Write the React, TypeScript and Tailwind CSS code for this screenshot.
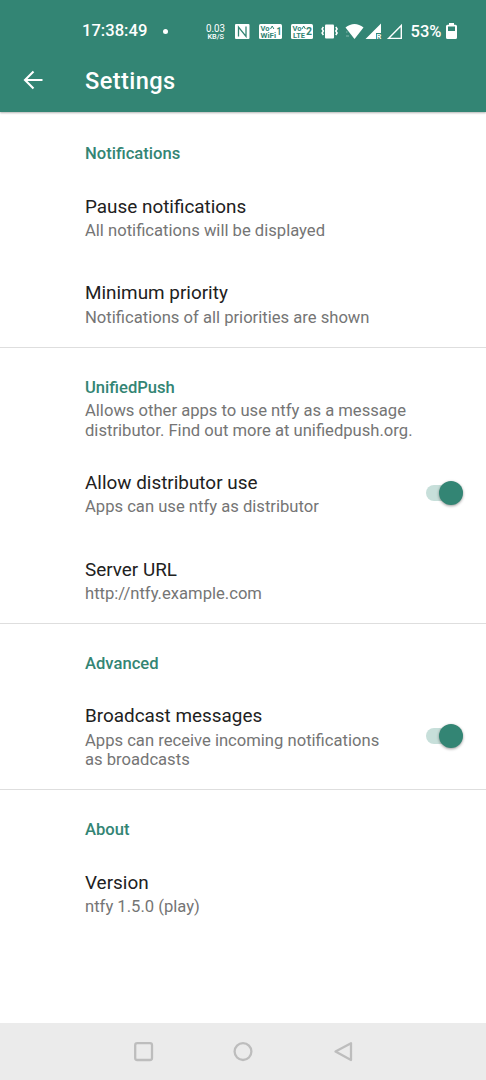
import type { ReactNode } from "react";

function Heading({ title, children }: { title: string; children?: ReactNode }) {
  return (
    <div className="pt-[30px] pb-[9.3px] pl-[85px]">
      <h2 className="text-[16.6px] leading-5 font-medium text-[#338574]">{title}</h2>
      {children && (
        <p className="mt-[3px] text-[16.63px] leading-[19.5px] text-[#757575]">
          {children}
        </p>
      )}
    </div>
  );
}

function Toggle() {
  return (
    <div className="mb-[3.5px] flex h-[16px] w-[37px] items-center justify-end rounded-full bg-[#c7dfda]">
      <div className="size-6 shrink-0 rounded-full bg-[#338574] shadow-[0_1px_3px_rgba(0,0,0,0.4)]" />
    </div>
  );
}

function Item({ title, children, toggle }: { title: string; children: ReactNode; toggle?: boolean }) {
  return (
    <div className="flex items-center justify-between pt-[22.6px] pb-[19px] pr-[23px] pl-[85px]">
      <div>
        <h3 className="text-[18.9px] leading-[22px] text-[#212121]">{title}</h3>
        <p className="mt-[3.5px] text-[16.63px] leading-[19.5px] text-[#757575]">
          {children}
        </p>
      </div>
      {toggle && <Toggle />}
    </div>
  );
}

function StatusIcons() {
  return (
    <svg width="266" height="24" viewBox="200 19 266 24" fill="#fff" fontFamily="Roboto, sans-serif">
      <text x="206" y="31.500" fontSize="10.500" textLength="19" lengthAdjust="spacingAndGlyphs">0.03</text>
      <text x="207.500" y="39" fontSize="6.600" fontWeight="500" textLength="16.500" lengthAdjust="spacingAndGlyphs">KB/S</text>
      <rect x="235" y="24" width="14.500" height="15" rx="1" />
      <path d="M238.500 36.500V27l7.500 9.500V26.500" fill="none" stroke="#338574" strokeWidth="1.300" />
      <rect x="259" y="24" width="23" height="15" rx="1.500" />
      <rect x="291" y="24" width="22" height="15" rx="1.500" />
      <g fill="#338574" fontWeight="700">
        <text x="260.500" y="31" fontSize="8" textLength="9" lengthAdjust="spacingAndGlyphs">Vo</text>
        <text x="260.500" y="38.300" fontSize="8" textLength="15.500" lengthAdjust="spacingAndGlyphs">WiFi</text>
        <text x="276.500" y="35" fontSize="10.500" textLength="5" lengthAdjust="spacingAndGlyphs">1</text>
        <text x="292.500" y="31" fontSize="8" textLength="9" lengthAdjust="spacingAndGlyphs">Vo</text>
        <text x="293" y="38.300" fontSize="8" textLength="12" lengthAdjust="spacingAndGlyphs">LTE</text>
        <text x="306" y="35" fontSize="10.500" textLength="6" lengthAdjust="spacingAndGlyphs">2</text>
      </g>
      <path d="m270.500 29 1.700-3 1.700 3M302 29l1.700-3 1.700 3" fill="none" stroke="#338574" />
      <rect x="325" y="24.500" width="9" height="14" rx="1" />
      <path d="m323.400 27-1.300 2 1.300 2-1.300 2 1.300 2M335.800 27l1.300 2-1.300 2 1.300 2-1.300 2" fill="none" stroke="#fff" strokeWidth="1.500" />
      <path d="M345.500 27.500c5.500-4.700 12.500-4.700 18 0L354.500 39Z" />
      <path d="M346 36h3M346 32h1.500" stroke="#fff" opacity=".4" />
      <path d="M365.500 39 381 23.500v9.500h-5V39Z" />
      <text x="376.500" y="39.300" fontSize="7.500" fontWeight="700">R</text>
      <path d="M388.500 38.400 401.300 25.500v12.900Z" fill="none" stroke="#fff" strokeWidth="1.400" />
      <text x="410.500" y="36.500" fontSize="16.500" fontWeight="500" textLength="31">53%</text>
      <path fillRule="evenodd" d="M449 23h5v1.700h1.500q1.500 0 1.500 1.500v11.300q0 1.500-1.500 1.500h-8q-1.500 0-1.500-1.500V26.200q0-1.500 1.500-1.500H449ZM448 26.500V31h7V26.500Z" />
    </svg>
  );
}

export default function App() {
  return (
    <div className="flex h-[1080px] w-[486px] flex-col overflow-hidden bg-white font-['Roboto',sans-serif]">
      <header className="h-[112px] shrink-0 bg-[#338574] text-white shadow-[0_1px_2px_rgba(0,0,0,0.3)]">
        <div className="flex h-[50px] items-center pt-3 pl-[82px]">
          <time className="w-[81px] text-[16.6px] leading-5 font-medium">17:38:49</time>
          <span className="mr-[32px] size-[5px] rounded-full bg-white" />
          <StatusIcons />
        </div>
        <div className="flex h-[62px] items-center">
          <svg className="mb-[2px] ml-[23px]" width="20" height="20" viewBox="0 0 20 20" fill="none" stroke="#fff" strokeWidth="2.100">
            <path d="M19.500 10H2.300M10.500 1.500 2 10l8.500 8.500" />
          </svg>
          <h1 className="ml-[42px] text-[23.6px] leading-7 font-medium tracking-[0.4px]">Settings</h1>
        </div>
      </header>
      <main className="flex-1 pt-[2px]">
        <section className="border-b border-[#dedede] pb-[0.6px]">
          <Heading title="Notifications" />
          <Item title="Pause notifications">All notifications will be displayed</Item>
          <Item title="Minimum priority">Notifications of all priorities are shown</Item>
        </section>
        <section className="border-b border-[#dedede]">
          <Heading title="UnifiedPush">
            Allows other apps to use ntfy as a message
            <br />
            distributor. Find out more at unifiedpush.org.
          </Heading>
          <Item title="Allow distributor use" toggle>Apps can use ntfy as distributor</Item>
          <Item title="Server URL">http://ntfy.example.com</Item>
        </section>
        <section className="border-b border-[#dedede]">
          <Heading title="Advanced" />
          <Item title="Broadcast messages" toggle>
            Apps can receive incoming notifications
            <br />
            as broadcasts
          </Item>
        </section>
        <section>
          <Heading title="About" />
          <Item title="Version">ntfy 1.5.0 (play)</Item>
        </section>
      </main>
      <nav className="flex h-[57px] shrink-0 items-center justify-center bg-[#ebebeb]">
        <svg width="486" height="57" viewBox="0 1023 486 57" fill="none" stroke="#bdbdbd" strokeWidth="2.300" strokeLinejoin="round">
          <rect x="135.200" y="1043.200" width="16.800" height="16.800" rx="2" />
          <circle cx="243" cy="1051.600" r="8.400" />
          <path d="M335.500 1051.600 351 1043.200v16.800Z" />
        </svg>
      </nav>
    </div>
  );
}
